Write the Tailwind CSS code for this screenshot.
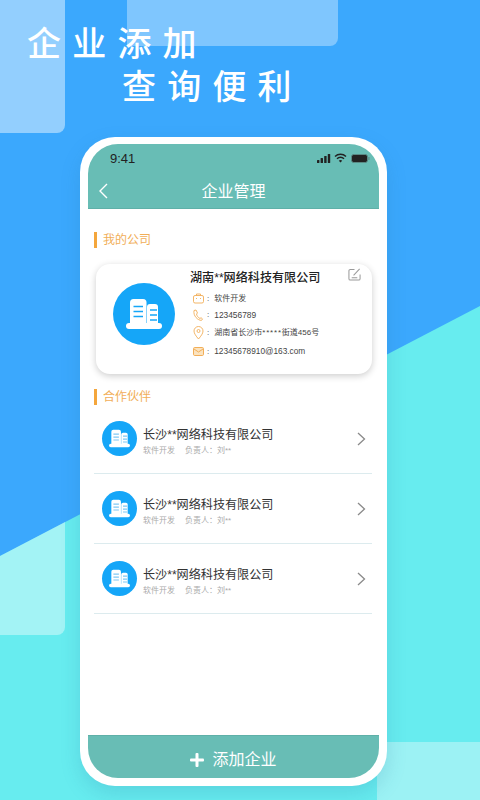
<!DOCTYPE html>
<html lang="zh">
<head>
  <meta charset="UTF-8">
  <title>企业管理</title>
  <script src="https://cdn.jsdelivr.net/npm/@tailwindcss/browser@4"></script>
</head>
<body class="m-0">
  <div class="relative w-[480px] h-[800px] overflow-hidden bg-[#3ba8fd] font-['Liberation_Sans','Noto_Sans_CJK_SC',sans-serif]">
    <!-- background shapes -->
    <svg class="absolute inset-0" width="480" height="800" viewBox="0 0 480 800">
      <polygon points="0,556 480,306 480,800 0,800" fill="#67ecef"/>
      <path d="M0 0H65V125a8 8 0 0 1-8 8H0Z" fill="#fff" fill-opacity="0.45"/>
      <path d="M127 0H338V38a8 8 0 0 1-8 8H127Z" fill="#fff" fill-opacity="0.35"/>
      <path d="M0 556L65 522V627a8 8 0 0 1-8 8H0Z" fill="#fff" fill-opacity="0.4"/>
      <rect x="377" y="742" width="103" height="58" fill="#fff" fill-opacity="0.35"/>
    </svg>

    <!-- heading -->
    <div class="absolute left-[27px] top-[23px] text-white text-[34px] leading-[43px] font-medium tracking-[11.2px] whitespace-nowrap">
      <div>企业添加</div>
      <div class="pl-[95px]">查询便利</div>
    </div>

    <!-- phone -->
    <div class="absolute left-[80px] top-[137px] w-[307px] h-[649px] bg-white rounded-[35px] pt-[7px] px-[8px] pb-[8px] flex flex-col shadow-[0_8px_20px_rgba(40,120,160,0.2)]">
      <div class="h-[65px] bg-[#68bdb5] rounded-t-[30px] border-b border-[#5fb0a8] shrink-0 flex flex-col">
        <div class="flex items-center justify-between pl-[22px] pr-[9px] pt-[6px] h-[22px]">
          <span class="text-[13px] leading-none text-[#222]">9:41</span>
          <div class="flex items-center gap-[3px]">
            <svg width="14" height="9" viewBox="0 0 14 9" fill="#222"><rect x="0" y="6" width="2.4" height="3" rx=".5"/><rect x="3.6" y="4" width="2.4" height="5" rx=".5"/><rect x="7.2" y="2" width="2.4" height="7" rx=".5"/><rect x="10.8" y="0" width="2.4" height="9" rx=".5"/></svg>
            <svg width="13" height="10" viewBox="0 0 13 10" fill="none" stroke="#222" stroke-width="1.5"><path d="M1 3.5a8 8 0 0 1 11 0"/><path d="M3 5.8a5 5 0 0 1 7 0"/><path d="M6.5 9.5L4.8 7.7a2.5 2.5 0 0 1 3.4 0Z" fill="#222" stroke="none"/></svg>
            <svg class="ml-[1px]" width="19" height="9" viewBox="0 0 19 9"><rect x="0.5" y="0.5" width="16" height="8" rx="2.2" fill="#222" stroke="#5a8a85"/><rect x="17.3" y="3" width="1.2" height="3" rx=".5" fill="#5a8a85"/></svg>
          </div>
        </div>
        <div class="relative flex-1 flex items-center justify-center text-white text-[16px] pt-[10px]">
          <svg class="absolute left-[10px] top-[17px]" width="10" height="16" viewBox="0 0 10 16" fill="none" stroke="#fff" stroke-width="1.4"><path d="M9 1L2 8l7 7"/></svg>
          <span>企业管理</span>
        </div>
      </div>

      <div class="flex-1 bg-white px-[6px]">
        <div class="mt-[23px] flex items-center h-[16px] border-l-[3px] border-[#f4a63c] pl-[6px] text-[12px] text-[#f1ae58]">我的公司</div>

        <!-- my company card -->
        <div class="relative mt-[16px] ml-[2px] w-[276px] h-[110px] rounded-[14px] bg-white shadow-[0_2px_7px_rgba(0,0,0,0.2)] flex">
          <div class="mt-[19px] ml-[17px] w-[62px] h-[62px] rounded-full bg-[#15a6f8] flex items-center justify-center shrink-0">
            <svg width="36" height="32" viewBox="0 0 36 32">
              <path d="M4 27V4.500Q4 1 7.500 1H17Q20.500 1 20.500 4.500V27Z" fill="#fff"/>
              <path d="M21 27V9Q21 6 24 6H29Q32 6 32 9V27Z" fill="#fff"/>
              <rect x="0" y="25" width="36" height="6" rx="3" fill="#fff"/>
              <path d="M7.500 8.500H17M7.500 13.500H17M7.500 18.500H17M24 12H31M24 17H31M24 22H31" stroke="#15a6f8" stroke-width="1.300"/>
            </svg>
          </div>
          <div class="ml-[15px] flex flex-col">
            <div class="mt-[5px] text-[12.1px] leading-[18px] text-[#222] font-medium whitespace-nowrap">湖南**网络科技有限公司</div>
            <div class="mt-[3px] flex flex-col text-[8px] text-[#444]">
              <div class="h-[17px] flex items-center">
                <svg class="ml-[3px] w-[11px]" width="11" height="11" viewBox="0 0 11 11" fill="none" stroke="#f2ae58" stroke-width="0.900"><rect x="0.500" y="2.500" width="10" height="7.500" rx="1.500"/><path d="M3.500 2.500V1h4v1.500M3.500 5v1M7.500 5v1"/></svg>
                <span class="ml-[3px] mr-[5px]">:</span><span>软件开发</span>
              </div>
              <div class="h-[16px] flex items-center">
                <svg class="ml-[3px] w-[11px]" width="11" height="12" viewBox="0 0 11 12" fill="none" stroke="#f2ae58" stroke-width="0.900"><path d="M1 1.500L3 1l1.500 3-1 1c.5 2 1.500 3.500 3.500 4.500l1-.8 1.500 1.200-1 1.500C5 11.500 0 7 1 1.500Z"/></svg>
                <span class="ml-[3px] mr-[5px]">:</span><span class="text-[8.4px]">123456789</span>
              </div>
              <div class="h-[19px] flex items-center">
                <svg class="ml-[3px] w-[11px]" width="11" height="14" viewBox="0 0 11 14" fill="none" stroke="#f2ae58" stroke-width="0.900"><path d="M5.500 13C3 10 1 7.500 1 5a4.500 4.500 0 0 1 9 0c0 2.500-2 5-4.500 8Z"/><circle cx="5.500" cy="5" r="1.500"/></svg>
                <span class="ml-[3px] mr-[5px]">:</span><span>湖南省长沙市<span class="tracking-[0.8px]">*****</span>街道456号</span>
              </div>
              <div class="h-[19px] flex items-center">
                <svg class="ml-[3px] w-[11px]" width="11" height="9" viewBox="0 0 11 9" fill="none" stroke="#f2ae58" stroke-width="1"><rect x="0.500" y="0.500" width="10" height="8" rx="1.200" fill="#fbe3bf"/><path d="M1 2l4.500 3L10 2"/></svg>
                <span class="ml-[3px] mr-[5px]">:</span><span class="text-[8.3px]">12345678910@163.com</span>
              </div>
            </div>
          </div>
          <svg class="absolute right-[11px] top-[4px]" width="13" height="13" viewBox="0 0 14 14" fill="none" stroke="#9a9a9a" stroke-width="1.100"><path d="M7 1.500H2.500a1.500 1.500 0 0 0-1.500 1.500v8.500A1.500 1.500 0 0 0 2.500 13h9a1.500 1.500 0 0 0 1.500-1.500V7"/><path d="M6 8L12.500 1"/><path d="M4 10.500h6"/></svg>
        </div>

        <div class="mt-[15px] flex items-center h-[16px] border-l-[3px] border-[#f4a63c] pl-[6px] text-[12px] text-[#f1ae58]">合作伙伴</div>

        <!-- partners -->
        <div class="w-[278px] -mt-[1px]">
          <div class="h-[70px] border-b border-[#dcebee] flex items-start pl-[8px]">
            <div class="mt-[17px] w-[35px] h-[35px] rounded-full bg-[#15a6f8] flex items-center justify-center shrink-0">
              <svg width="21" height="19" viewBox="0 0 36 32"><path d="M4 27V4.500Q4 1 7.500 1H17Q20.500 1 20.500 4.500V27Z" fill="#fff"/><path d="M21 27V9Q21 6 24 6H29Q32 6 32 9V27Z" fill="#fff"/><rect x="0" y="25" width="36" height="6" rx="3" fill="#fff"/><path d="M7.500 8.500H17M7.500 13.500H17M7.500 18.500H17M24 12H31M24 17H31M24 22H31" stroke="#7fc8f5" stroke-width="2"/></svg>
            </div>
            <div class="ml-[6px] mt-[22px] flex-1">
              <div class="text-[12.1px] leading-[18px] text-[#333] whitespace-nowrap">长沙**网络科技有限公司</div>
              <div class="mt-[1px] text-[8px] text-[#aaa] flex gap-[10px]"><span>软件开发</span><span>负责人：刘**</span></div>
            </div>
            <svg class="mt-[28px] mr-[6px]" width="9" height="14" viewBox="0 0 9 14" fill="none" stroke="#8a8a8a" stroke-width="1.300"><path d="M1 1l6.500 6L1 13"/></svg>
          </div>
          <div class="h-[70px] border-b border-[#dcebee] flex items-start pl-[8px]">
            <div class="mt-[17px] w-[35px] h-[35px] rounded-full bg-[#15a6f8] flex items-center justify-center shrink-0">
              <svg width="21" height="19" viewBox="0 0 36 32"><path d="M4 27V4.500Q4 1 7.500 1H17Q20.500 1 20.500 4.500V27Z" fill="#fff"/><path d="M21 27V9Q21 6 24 6H29Q32 6 32 9V27Z" fill="#fff"/><rect x="0" y="25" width="36" height="6" rx="3" fill="#fff"/><path d="M7.500 8.500H17M7.500 13.500H17M7.500 18.500H17M24 12H31M24 17H31M24 22H31" stroke="#7fc8f5" stroke-width="2"/></svg>
            </div>
            <div class="ml-[6px] mt-[22px] flex-1">
              <div class="text-[12.1px] leading-[18px] text-[#333] whitespace-nowrap">长沙**网络科技有限公司</div>
              <div class="mt-[1px] text-[8px] text-[#aaa] flex gap-[10px]"><span>软件开发</span><span>负责人：刘**</span></div>
            </div>
            <svg class="mt-[28px] mr-[6px]" width="9" height="14" viewBox="0 0 9 14" fill="none" stroke="#8a8a8a" stroke-width="1.300"><path d="M1 1l6.500 6L1 13"/></svg>
          </div>
          <div class="h-[70px] border-b border-[#dcebee] flex items-start pl-[8px]">
            <div class="mt-[17px] w-[35px] h-[35px] rounded-full bg-[#15a6f8] flex items-center justify-center shrink-0">
              <svg width="21" height="19" viewBox="0 0 36 32"><path d="M4 27V4.500Q4 1 7.500 1H17Q20.500 1 20.500 4.500V27Z" fill="#fff"/><path d="M21 27V9Q21 6 24 6H29Q32 6 32 9V27Z" fill="#fff"/><rect x="0" y="25" width="36" height="6" rx="3" fill="#fff"/><path d="M7.500 8.500H17M7.500 13.500H17M7.500 18.500H17M24 12H31M24 17H31M24 22H31" stroke="#7fc8f5" stroke-width="2"/></svg>
            </div>
            <div class="ml-[6px] mt-[22px] flex-1">
              <div class="text-[12.1px] leading-[18px] text-[#333] whitespace-nowrap">长沙**网络科技有限公司</div>
              <div class="mt-[1px] text-[8px] text-[#aaa] flex gap-[10px]"><span>软件开发</span><span>负责人：刘**</span></div>
            </div>
            <svg class="mt-[28px] mr-[6px]" width="9" height="14" viewBox="0 0 9 14" fill="none" stroke="#8a8a8a" stroke-width="1.300"><path d="M1 1l6.500 6L1 13"/></svg>
          </div>
        </div>
      </div>

      <div class="h-[43px] shrink-0 bg-[#68bdb5] border-t border-[#5fb0a8] rounded-b-[30px] flex items-center justify-center text-white text-[16px] gap-[8px] pt-[6px]">
        <svg width="14" height="14" viewBox="0 0 14 14" fill="#fff"><rect x="5.500" y="0" width="3" height="14" rx="1"/><rect x="0" y="5.500" width="14" height="3" rx="1"/></svg>
        <span>添加企业</span>
      </div>
    </div>
  </div>
</body>
</html>
